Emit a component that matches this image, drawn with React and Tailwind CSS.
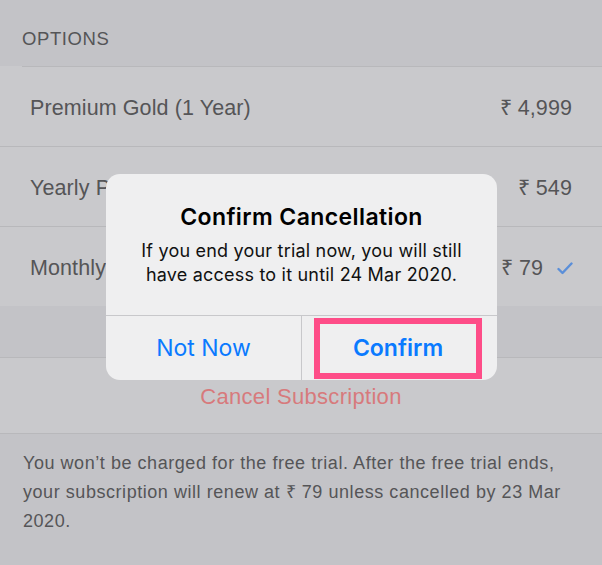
export default function App() {
  const rows = [
    { name: 'Premium Gold (1 Year)', price: '₹ 4,999' },
    { name: 'Yearly Premium', price: '₹ 549' },
    { name: 'Monthly Premium', price: '₹ 79', checked: true },
  ]

  return (
    <div className="relative w-[602px] h-[565px] overflow-hidden bg-[#c3c3c7] text-[#555557] font-['Liberation_Sans',Arial,sans-serif]">
      <div className="h-[66px] px-[22px] pt-[28px] text-[18.5px] tracking-[0.6px] leading-[22px]">OPTIONS</div>

      <div className="bg-[#c9c9cc]">
        <div className="ml-[22px] h-px bg-[#b8b8bb]" />
        {rows.map((r, i) => (
          <div key={i}>
            <div className="h-[79px] flex items-center pl-[30px] pr-[30px] pt-[3px] text-[21.5px] tracking-[0.1px]">
              <span className="flex-1">{r.name}</span>
              <span>{r.price}</span>
              {r.checked && (
                <svg width="16" height="13" viewBox="0 0 16 13" className="ml-[14px] -mr-[1px]">
                  <path d="M1.5 7 L5.5 11 L14.5 1.5" fill="none" stroke="#5b8fd9" strokeWidth="2.4" strokeLinecap="round" strokeLinejoin="round" />
                </svg>
              )}
            </div>
            {i < rows.length - 1 && <div className="h-px bg-[#b8b8bb]" />}
          </div>
        ))}
      </div>

      <div className="h-[51px]" />
      <div className="h-px bg-[#b8b8bb]" />
      <div className="h-[75px] bg-[#c9c9cc] flex items-center justify-center pt-[1px] text-[22px] tracking-[0.3px] text-[#d77a7c]">
        Cancel Subscription
      </div>
      <div className="h-px bg-[#b8b8bb]" />

      <p className="px-[23px] pt-[15px] text-[18px] tracking-[0.55px] leading-[29px]">
        You won’t be charged for the free trial. After the free trial ends, your subscription will renew at ₹ 79 unless cancelled by 23 Mar 2020.
      </p>

      <div className="absolute left-[106px] top-[174px] w-[391px] h-[206px] rounded-[14px] bg-[#efeff0] flex flex-col font-['Inter',Roboto,sans-serif] overflow-hidden">
        <div className="h-[141px] flex flex-col items-center pt-[29px] text-center">
          <div className="text-[23px] leading-[28px] font-semibold tracking-[0.4px] text-black">Confirm Cancellation</div>
          <div className="mt-[8px] text-[18px] leading-[24px] tracking-[0.2px] text-[#111]">
            If you end your trial now, you will still<br />have access to it until 24 Mar 2020.
          </div>
        </div>
        <div className="h-px bg-[#c8c8cb]" />
        <div className="flex flex-1 text-[23px] text-[#0a7aff]">
          <div className="w-[195px] flex items-center justify-center">Not Now</div>
          <div className="w-px bg-[#c8c8cb]" />
          <div className="flex-1 flex pl-[12px] pr-[15px] pt-[2px] pb-[1px]">
            <div className="flex-1 border-[6px] border-[#fe4d88] flex items-center justify-center font-semibold">Confirm</div>
          </div>
        </div>
      </div>
    </div>
  )
}
